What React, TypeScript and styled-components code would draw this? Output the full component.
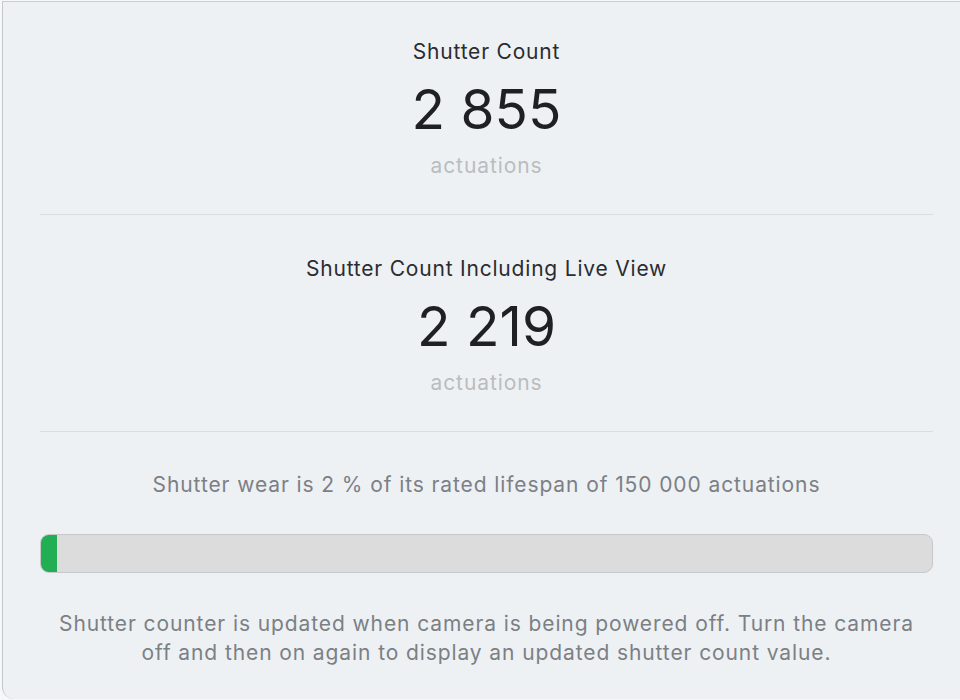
import React from "react";
import styled, { createGlobalStyle } from "styled-components";

const GlobalStyle = createGlobalStyle`
  html, body {
    margin: 0;
    padding: 0;
    background: #f6f7f8;
  }
  body {
    font-family: Inter, "Noto Sans", "Liberation Sans", sans-serif;
  }
`;

const Panel = styled.div`
  box-sizing: border-box;
  margin-left: 2px;
  margin-top: 1px;
  width: 958px;
  height: 698px;
  background: #eef1f4;
  border-left: 1px solid #c4c7cb;
  border-top: 1px solid #c9ccd0;
  border-bottom-left-radius: 12px;
  padding: 38px 27px 0 37px;
  display: flex;
  flex-direction: column;
`;

const Section = styled.section<{ $top: number; $bottom: number }>`
  display: flex;
  flex-direction: column;
  align-items: center;
  padding-top: ${(p) => p.$top}px;
  padding-bottom: ${(p) => p.$bottom}px;
`;

const Title = styled.div`
  font-size: 21px;
  line-height: 24px;
  letter-spacing: 0.8px;
  color: #2a2c2f;
  font-weight: 400;
`;

const Count = styled.div`
  margin-top: 15px;
  font-size: 55px;
  line-height: 60px;
  font-weight: 400;
  color: #1e2023;
`;

const Unit = styled.div`
  margin-top: 15px;
  font-size: 21px;
  line-height: 24px;
  letter-spacing: 0.9px;
  color: #b9bdc1;
`;

const Divider = styled.hr`
  margin: 0;
  border: none;
  height: 1px;
  background: #d9dce0;
`;

const WearText = styled.div`
  text-align: center;
  font-size: 21px;
  line-height: 24px;
  letter-spacing: 0.9px;
  color: #7b8085;
  margin-top: 41px;
`;

const Bar = styled.div`
  box-sizing: border-box;
  margin-top: 37px;
  height: 39px;
  border-radius: 9px;
  background: #dcdcdd;
  border: 1px solid #c6c8ca;
  overflow: hidden;
  display: flex;
`;

const Fill = styled.div`
  height: 100%;
  background: #22ae52;
`;

const Note = styled.p`
  margin: 36px 0 0;
  text-align: center;
  font-size: 21px;
  line-height: 29px;
  letter-spacing: 0.9px;
  color: #7b8085;
  padding: 0 10px;
`;

const stats = [
  { title: "Shutter Count", value: "2 855", top: 0, bottom: 36 },
  { title: "Shutter Count Including Live View", value: "2 219", top: 42, bottom: 36 },
];

export default function App() {
  const wearPercent = 2;
  return (
    <>
      <GlobalStyle />
      <Panel>
        {stats.map((s) => (
          <React.Fragment key={s.title}>
            <Section $top={s.top} $bottom={s.bottom}>
              <Title>{s.title}</Title>
              <Count>{s.value}</Count>
              <Unit>actuations</Unit>
            </Section>
            <Divider />
          </React.Fragment>
        ))}
        <WearText>Shutter wear is 2 % of its rated lifespan of 150 000 actuations</WearText>
        <Bar>
          <Fill style={{ width: `${Math.max(wearPercent * 0.9, 1.8)}%` }} />
        </Bar>
        <Note>
          Shutter counter is updated when camera is being powered off. Turn the camera off and then on again to display an updated shutter count value.
        </Note>
      </Panel>
    </>
  );
}
